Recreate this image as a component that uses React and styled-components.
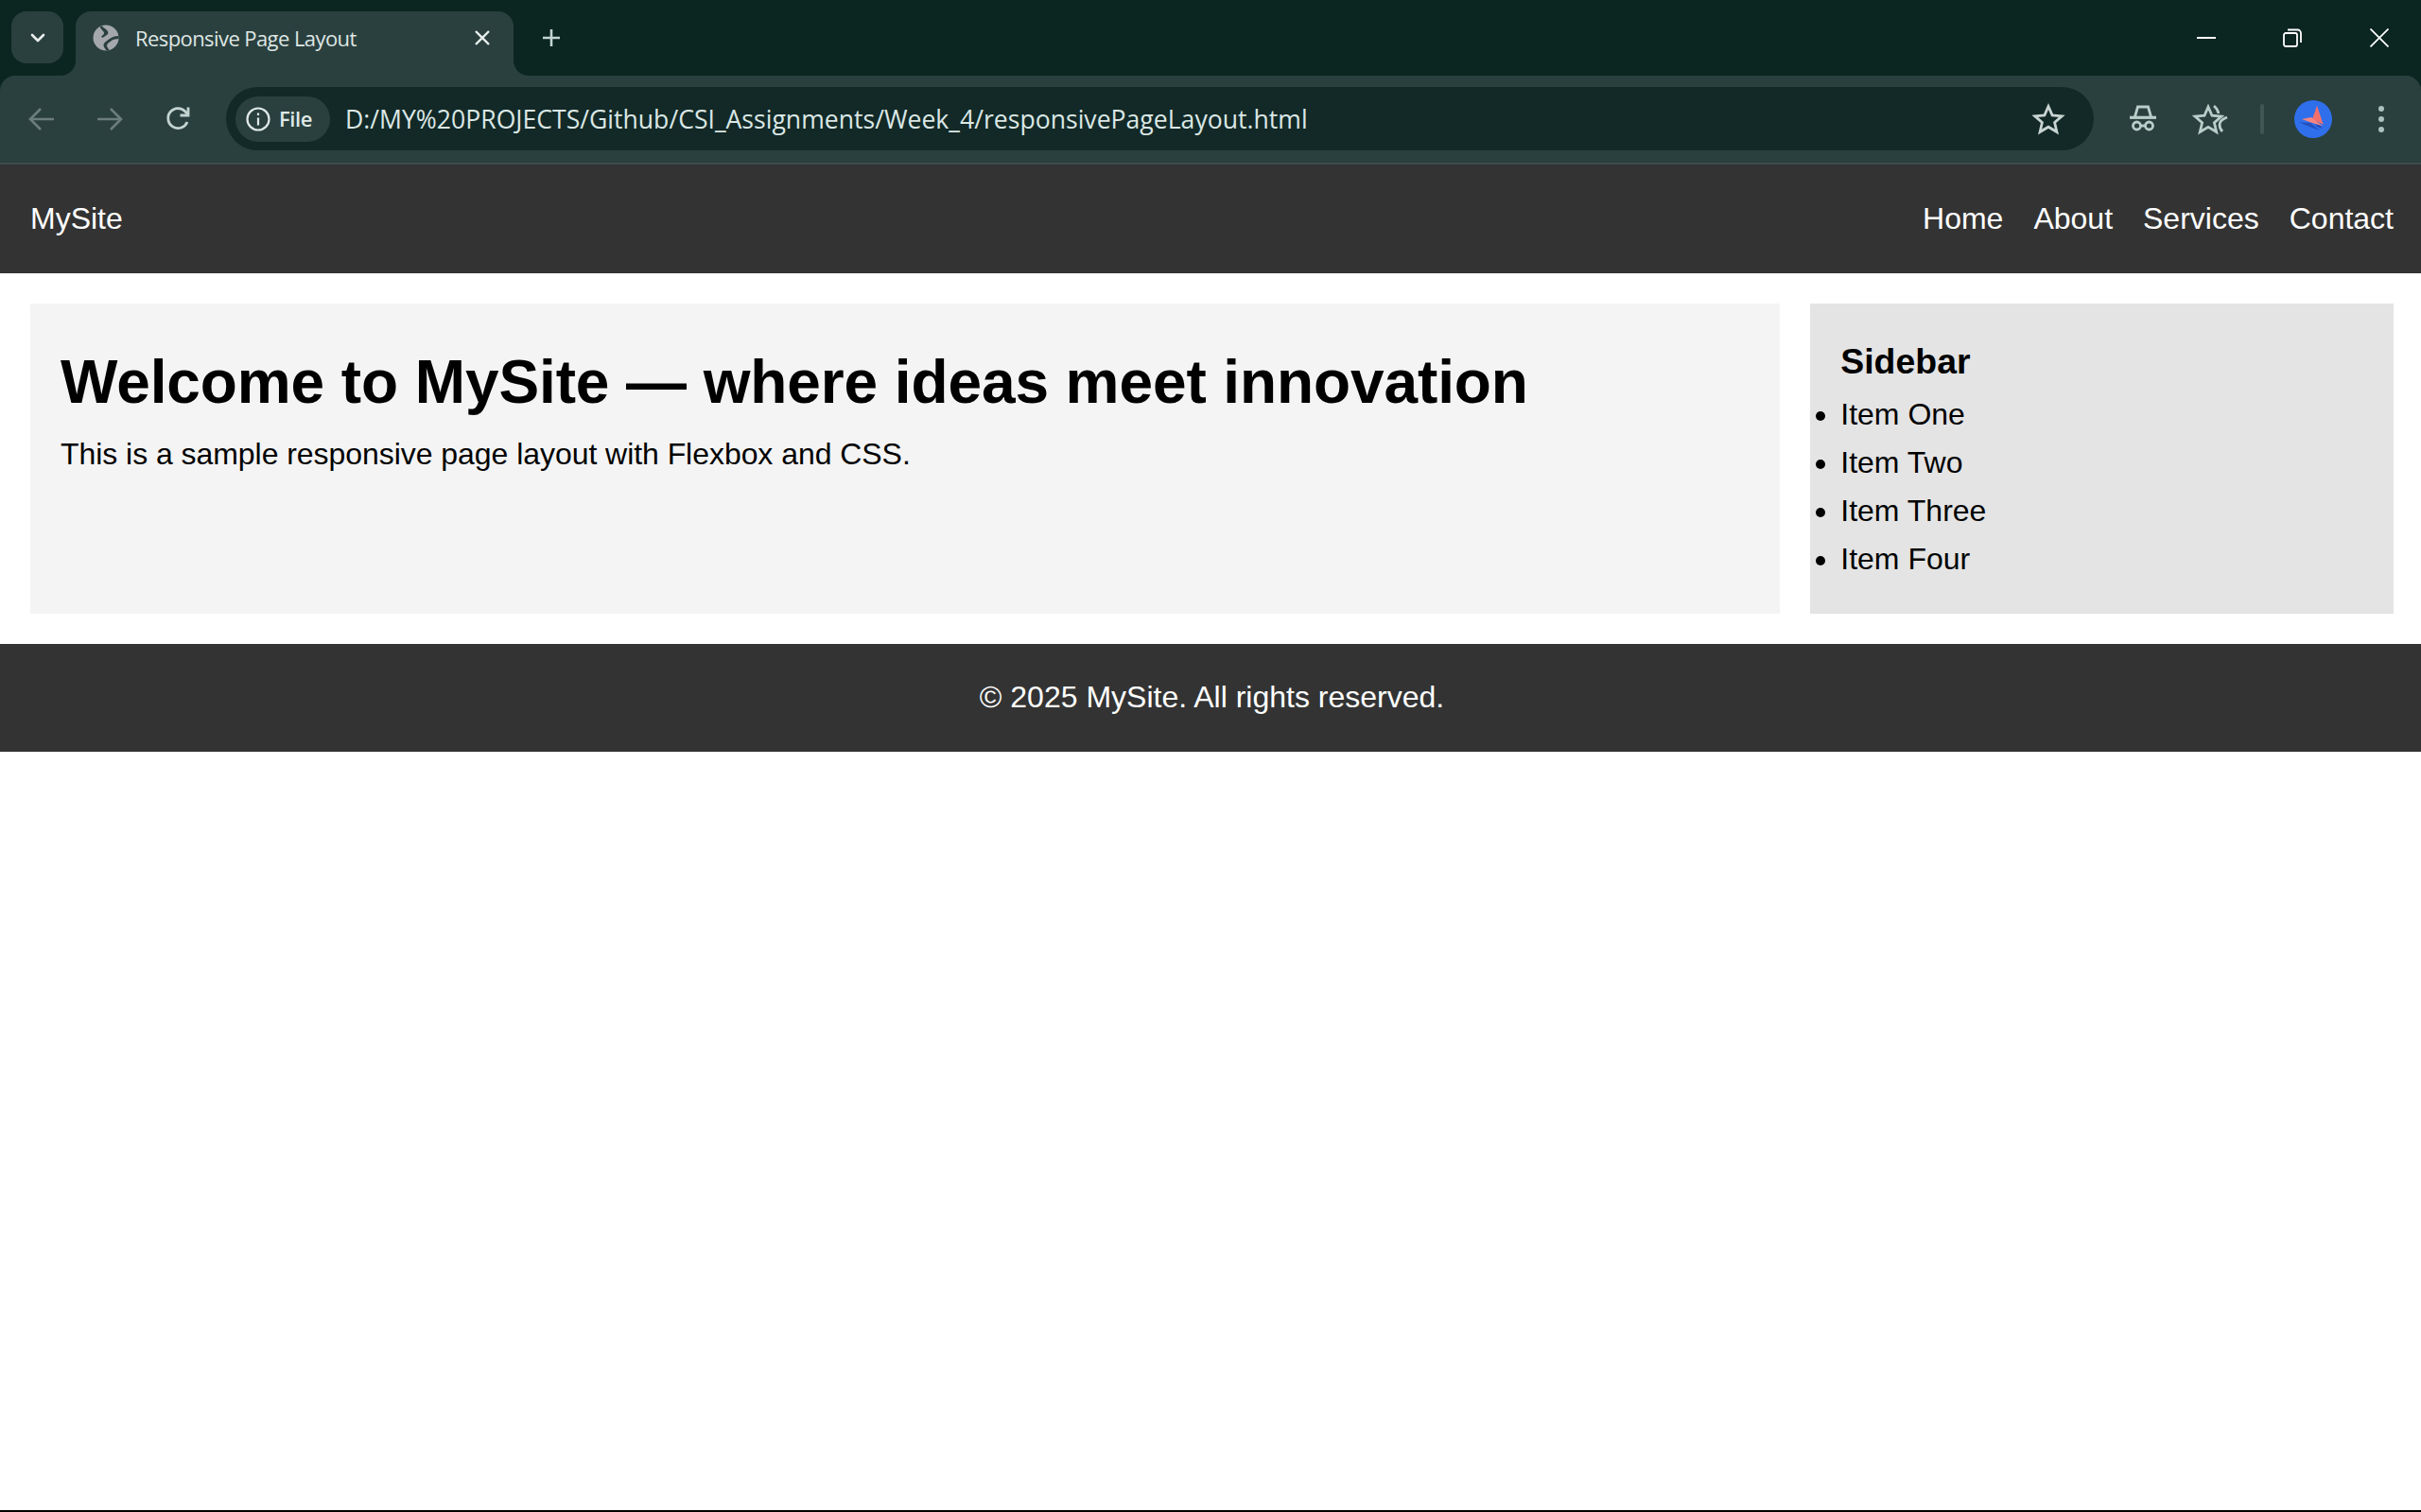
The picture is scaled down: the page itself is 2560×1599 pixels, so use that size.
import React from "react";
import styled, { createGlobalStyle } from "styled-components";

const Global = createGlobalStyle`
  html, body { margin: 0; padding: 0; background: #fff; }
  * { box-sizing: border-box; }
  svg { flex: none; display: block; }
`;

const Page = styled.div`
  min-height: 1599px;
  display: flex;
  flex-direction: column;
  font-family: "Liberation Sans", Arial, sans-serif;
  font-size: 32px;
  line-height: 51px;
  color: #000;
`;

const Chrome = styled.div`
  height: 174px;
  flex: none;
  display: flex;
  flex-direction: column;
  background: #0b2520;
  font-family: "Open Sans", "Noto Sans", sans-serif;
`;

const TabStrip = styled.div`
  height: 80px;
  flex: none;
  display: flex;
  align-items: flex-start;
  padding: 12px 0 0 12px;
`;

const TabSearch = styled.div`
  width: 55px;
  height: 55px;
  border-radius: 16px;
  background: #2a403e;
  display: flex;
  align-items: center;
  justify-content: center;
  margin-right: 13px;
`;

const Tab = styled.div`
  position: relative;
  width: 463px;
  height: 68px;
  background: #2a403e;
  border-radius: 16px 16px 0 0;
  display: flex;
  align-items: center;
  padding: 0 0 12px 18px;
  color: #dfe6e4;

  &::before,
  &::after {
    content: "";
    position: absolute;
    bottom: 0;
    width: 16px;
    height: 16px;
  }
  &::before {
    left: -16px;
    background: radial-gradient(circle at 0 0, #0b2520 15.5px, #2a403e 16.5px);
  }
  &::after {
    right: -16px;
    background: radial-gradient(circle at 100% 0, #0b2520 15.5px, #2a403e 16.5px);
  }
`;

const TabTitle = styled.span`
  flex: 1;
  margin-left: 17px;
  font-size: 22px;
  line-height: 28px;
  letter-spacing: -0.58px;
  white-space: nowrap;
`;

const TabClose = styled.div`
  width: 24px;
  height: 24px;
  margin-right: 21px;
  display: flex;
`;

const NewTab = styled.div`
  width: 28px;
  height: 28px;
  margin: 14px 0 0 26px;
  display: flex;
`;

const Spacer = styled.div`
  flex: 1;
`;

const WindowControls = styled.div`
  display: flex;
`;

const WindowButton = styled.div`
  width: ${(p) => p.$w}px;
  height: 56px;
  display: flex;
  align-items: flex-start;
  justify-content: center;
  padding-top: 18px;
`;

const Toolbar = styled.div`
  height: 94px;
  flex: none;
  background: #2a403e;
  border-radius: 16px 16px 0 0;
  border-bottom: 2px solid #3c4d4b;
  display: flex;
  align-items: flex-start;
  padding: 12px 0 0;
`;

const NavIcon = styled.div`
  width: 32px;
  height: 32px;
  margin: 18px 0 0 ${(p) => p.$ml}px;
  display: flex;
  flex: none;
`;

const Omnibox = styled.div`
  width: 1975px;
  height: 67px;
  flex: none;
  margin-left: 35px;
  border-radius: 34px;
  background: #122927;
  display: flex;
  align-items: center;
  padding: 0 30px 0 10px;
`;

const SecurityPill = styled.div`
  width: 100px;
  height: 48px;
  flex: none;
  border-radius: 24px;
  background: #2a403e;
  display: flex;
  align-items: center;
  padding-left: 10px;
  gap: 8px;
  color: #dfe9e7;
  font-size: 22px;
  font-weight: 600;
  letter-spacing: -0.4px;
`;

const Url = styled.span`
  flex: 1;
  margin-left: 16px;
  color: #dbe7e5;
  font-size: 26.6px;
  line-height: 34px;
  white-space: nowrap;
`;

const ToolIcon = styled.div`
  width: ${(p) => p.$w}px;
  height: 36px;
  flex: none;
  display: flex;
  margin: ${(p) => p.$mt}px 0 0 ${(p) => p.$ml}px;
`;

const Separator = styled.div`
  width: 4px;
  height: 32px;
  flex: none;
  margin: 18px 0 0 34px;
  border-radius: 2px;
  background: #3f5654;
`;

const Header = styled.header`
  background: #333;
  color: #fff;
  padding: 32px 29px 32px 32px;
  display: flex;
  justify-content: space-between;
`;

const Logo = styled.div``;

const Nav = styled.nav`
  display: flex;
  gap: 32px;
`;

const NavLink = styled.a`
  color: #fff;
  text-decoration: none;
`;

const Main = styled.main`
  display: grid;
  grid-template-columns: 3fr 1fr;
  gap: 32px;
  padding: 32px 29px 32px 32px;
`;

const Content = styled.section`
  background: #f4f4f4;
  padding: 32px;
`;

const Title = styled.h1`
  margin: 0;
  font-size: 64px;
  line-height: 102px;
  letter-spacing: -0.1px;
  font-weight: 700;
`;

const Body = styled.p`
  margin: 0;
  letter-spacing: -0.05px;
`;

const Sidebar = styled.aside`
  background: #e4e4e4;
  padding: 32px;
`;

const SideTitle = styled.h3`
  margin: 0;
  font-size: 37.44px;
  line-height: 59px;
  padding-bottom: 1px;
  font-weight: 700;
`;

const SideList = styled.ul`
  margin: 0;
  padding: 0;
`;

const Footer = styled.footer`
  background: #333;
  color: #fff;
  padding: 31px 29px 33px 32px;
  line-height: 50px;
  text-align: center;
`;

const BottomEdge = styled.div`
  margin-top: auto;
  height: 2px;
  background: #000;
`;

const Chevron = () => (
  <svg width="20" height="20" viewBox="0 0 20 20" fill="none" stroke="#e8eeec" strokeWidth="2.6" strokeLinecap="round" strokeLinejoin="round">
    <path d="M4 7l6 6 6-6" />
  </svg>
);
const Globe = () => (
  <svg width="28" height="28" viewBox="0 0 28 28">
    <circle cx="14" cy="14" r="13.500" fill="#a4a8ad" />
    <path d="M10 1.500c1.500 2.500 5.500 3.500 6.300 6.500.6 2.800-2.800 3.800-5.800 6l-1.500-1.500c2-1.500 3.500-2.500 3-4C11.500 7 9 5 7.500 2.500z" fill="#2a403e" />
    <path d="M27.500 12c-3.500.5-7 .8-9.500 3-2.800 2.300-6 3.800-6.500 6-.4 2.200 1.500 4 3 6.500l3-.5c-1.500-2.500-2.800-4-2.500-5.300.3-1.700 3-3 5-4.700 2-1.500 4.500-1.700 7.500-2z" fill="#2a403e" />
  </svg>
);
const Close = () => (
  <svg width="24" height="24" viewBox="0 0 24 24" fill="none" stroke="#e8eeec" strokeWidth="2.4">
    <path d="M5 5l14 14M19 5L5 19" />
  </svg>
);
const WindowClose = () => (
  <svg width="20" height="20" viewBox="0 0 20 20" fill="none" stroke="#fff" strokeWidth="1.700">
    <path d="M.5.5l19 19M19.500.5l-19 19" />
  </svg>
);
const Plus = () => (
  <svg width="28" height="28" viewBox="0 0 28 28" fill="none" stroke="#c3d4d0" strokeWidth="2.6">
    <path d="M14 5v18M5 14h18" />
  </svg>
);
const Arrow = ({ flip }) => (
  <svg width="32" height="32" viewBox="0 0 32 32" fill="none" stroke="#6c7e7b" strokeWidth="2.6" transform={flip ? "scale(-1 1)" : undefined}>
    <path d="M29 16H5M15 5L4 16l11 11" />
  </svg>
);
const Reload = () => (
  <svg width="32" height="32" viewBox="0 0 32 32" fill="none" stroke="#c3d4d0" strokeWidth="2.8">
    <path d="M26 19a10.500 10.500 0 1 1-2-11l3 3.500" />
    <path d="M27 3.500V12h-8.500" />
  </svg>
);
const Info = () => (
  <svg width="28" height="28" viewBox="0 0 28 28" fill="none" stroke="#dfe9e7" strokeWidth="2.2">
    <circle cx="14" cy="14" r="11.500" />
    <path d="M14 12.500v8M14 7.500v2.500" />
  </svg>
);
const Star = () => (
  <svg width="36" height="36" viewBox="0 0 36 36" fill="none" stroke="#c8d4d1" strokeWidth="2.800">
    <path d="M18 4.500l4.100 9.400 10.200.9-7.700 6.700 2.300 10-8.900-5.300-8.900 5.300 2.300-10-7.700-6.700 10.200-.9z" />
  </svg>
);
const Incognito = () => (
  <svg width="36" height="36" viewBox="0 0 36 36" fill="none" stroke="#b9cdc9" strokeWidth="2.800">
    <path d="M9.500 15.500L12.500 5h11l3 10.500" />
    <path d="M4 16.300h28" strokeWidth="3.200" />
    <circle cx="11.500" cy="25" r="4" />
    <circle cx="24.500" cy="25" r="4" />
    <path d="M15.500 25h5" />
  </svg>
);
const StarList = () => (
  <svg width="38" height="36" viewBox="0 0 38 36" fill="none" stroke="#b9cdc9" strokeWidth="2.800">
    <path d="M17 5l4 9.200 10 .9-7.600 6.600 2.300 9.800-8.700-5.200-8.700 5.200 2.300-9.800L3 15.100l10-.9z" />
    <path d="M23 4c2 1.500 4 4 5 8M37 16c-4 1.500-8 4.500-8 8 0 3 1 5 3 7" />
  </svg>
);
const Avatar = () => (
  <svg width="40" height="40" viewBox="0 0 40 40">
    <circle cx="20" cy="20" r="20" fill="#2f6fec" />
    <path d="M4.700 23.300L17 24l10 8-7-2.500z" fill="#2450bd" />
    <path d="M20 20l4 8 6 2-4-5z" fill="#2450bd" />
    <path d="M24 5.700L30.700 25.700 19 20z" fill="#f2706c" />
    <path d="M8 20l10-2 12 9.300-11-3.300z" fill="#f58580" />
  </svg>
);
const Dots = () => (
  <svg width="12" height="36" viewBox="0 0 12 36" fill="#a9c2bd">
    <circle cx="6" cy="7" r="3" />
    <circle cx="6" cy="18" r="3" />
    <circle cx="6" cy="29" r="3" />
  </svg>
);
const Minimize = () => (
  <svg width="20" height="20" viewBox="0 0 20 20" stroke="#fff" strokeWidth="2"><path d="M0 10h20" /></svg>
);
const Restore = () => (
  <svg width="20" height="20" viewBox="0 0 20 20" fill="none" stroke="#fff" strokeWidth="1.800">
    <rect x="1" y="5" width="14" height="14" rx="2" />
    <path d="M5 1.500h10.500a3.500 3.500 0 0 1 3.500 3.500v10" />
  </svg>
);

export default function App() {
  return (
    <Page>
      <Global />
      <Chrome>
        <TabStrip>
          <TabSearch><Chevron /></TabSearch>
          <Tab>
            <Globe />
            <TabTitle>Responsive Page Layout</TabTitle>
            <TabClose><Close /></TabClose>
          </Tab>
          <NewTab><Plus /></NewTab>
          <Spacer />
          <WindowControls>
            <WindowButton $w={86}><Minimize /></WindowButton>
            <WindowButton $w={96}><Restore /></WindowButton>
            <WindowButton $w={88}><WindowClose /></WindowButton>
          </WindowControls>
        </TabStrip>
        <Toolbar>
          <NavIcon $ml={28}><Arrow /></NavIcon>
          <NavIcon $ml={40}><Arrow flip /></NavIcon>
          <NavIcon $ml={40}><Reload /></NavIcon>
          <Omnibox>
            <SecurityPill><Info />File</SecurityPill>
            <Url>D:/MY%20PROJECTS/Github/CSI_Assignments/Week_4/responsivePageLayout.html</Url>
            <Star />
          </Omnibox>
          <ToolIcon $w={36} $mt={16} $ml={34}><Incognito /></ToolIcon>
          <ToolIcon $w={38} $mt={16} $ml={34}><StarList /></ToolIcon>
          <Separator />
          <ToolIcon $w={40} $mt={14} $ml={32}><Avatar /></ToolIcon>
          <ToolIcon $w={12} $mt={16} $ml={46}><Dots /></ToolIcon>
        </Toolbar>
      </Chrome>
      <Header>
        <Logo>MySite</Logo>
        <Nav>
          <NavLink>Home</NavLink>
          <NavLink>About</NavLink>
          <NavLink>Services</NavLink>
          <NavLink>Contact</NavLink>
        </Nav>
      </Header>
      <Main>
        <Content>
          <Title>Welcome to MySite — where ideas meet innovation</Title>
          <Body>This is a sample responsive page layout with Flexbox and CSS.</Body>
        </Content>
        <Sidebar>
          <SideTitle>Sidebar</SideTitle>
          <SideList>
            <li>Item One</li>
            <li>Item Two</li>
            <li>Item Three</li>
            <li>Item Four</li>
          </SideList>
        </Sidebar>
      </Main>
      <Footer>© 2025 MySite. All rights reserved.</Footer>
      <BottomEdge />
    </Page>
  );
}
